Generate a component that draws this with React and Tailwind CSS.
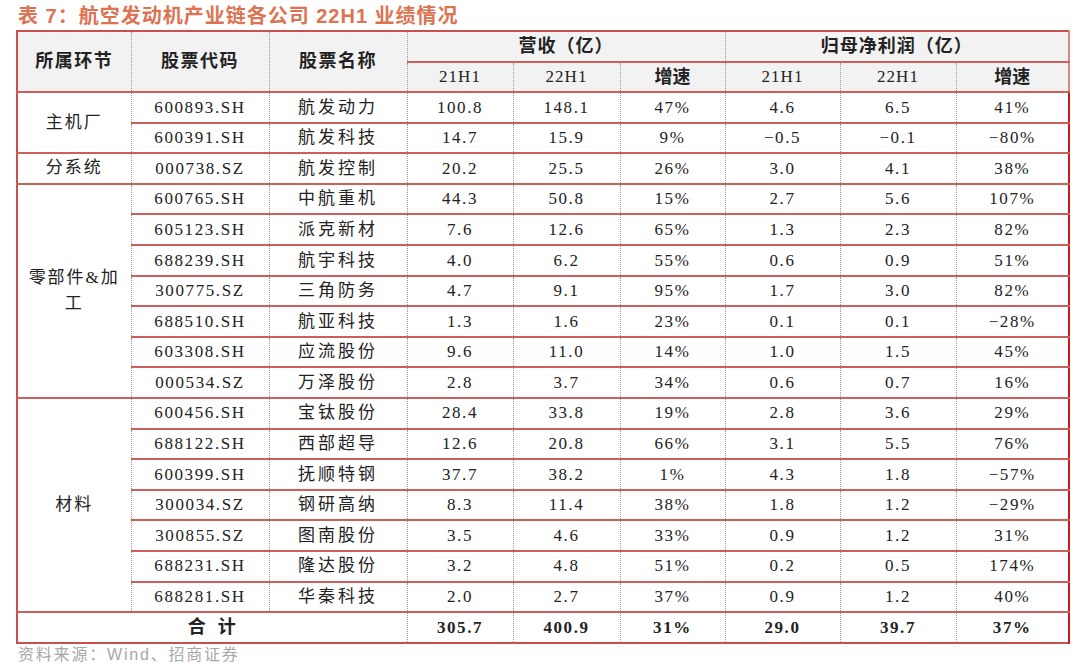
import React from 'react';

const groups = [
  {
    name: '主机厂',
    rows: [
      ['600893.SH', '航发动力', '100.8', '148.1', '47%', '4.6', '6.5', '41%'],
      ['600391.SH', '航发科技', '14.7', '15.9', '9%', '−0.5', '−0.1', '−80%'],
    ],
  },
  {
    name: '分系统',
    rows: [['000738.SZ', '航发控制', '20.2', '25.5', '26%', '3.0', '4.1', '38%']],
  },
  {
    name: (
      <>
        零部件&amp;加<br />工
      </>
    ),
    rows: [
      ['600765.SH', '中航重机', '44.3', '50.8', '15%', '2.7', '5.6', '107%'],
      ['605123.SH', '派克新材', '7.6', '12.6', '65%', '1.3', '2.3', '82%'],
      ['688239.SH', '航宇科技', '4.0', '6.2', '55%', '0.6', '0.9', '51%'],
      ['300775.SZ', '三角防务', '4.7', '9.1', '95%', '1.7', '3.0', '82%'],
      ['688510.SH', '航亚科技', '1.3', '1.6', '23%', '0.1', '0.1', '−28%'],
      ['603308.SH', '应流股份', '9.6', '11.0', '14%', '1.0', '1.5', '45%'],
      ['000534.SZ', '万泽股份', '2.8', '3.7', '34%', '0.6', '0.7', '16%'],
    ],
  },
  {
    name: '材料',
    rows: [
      ['600456.SH', '宝钛股份', '28.4', '33.8', '19%', '2.8', '3.6', '29%'],
      ['688122.SH', '西部超导', '12.6', '20.8', '66%', '3.1', '5.5', '76%'],
      ['600399.SH', '抚顺特钢', '37.7', '38.2', '1%', '4.3', '1.8', '−57%'],
      ['300034.SZ', '钢研高纳', '8.3', '11.4', '38%', '1.8', '1.2', '−29%'],
      ['300855.SZ', '图南股份', '3.5', '4.6', '33%', '0.9', '1.2', '31%'],
      ['688231.SH', '隆达股份', '3.2', '4.8', '51%', '0.2', '0.5', '174%'],
      ['688281.SH', '华秦科技', '2.0', '2.7', '37%', '0.9', '1.2', '40%'],
    ],
  },
];

// shared cell borders: red row lines, dotted grey column lines
const dot = 'border-l border-l-[#9a9a9a] [border-left-style:dotted]';
const line = 'border-b-2 border-b-[#cc5f5b]';

function App() {
  return (
    <div className="w-[1080px] h-[670px] bg-white pt-[5px] pl-[18px] font-['Liberation_Serif','Noto_Sans_CJK_SC',serif] text-[#222]">
      <div className="h-[25px] text-[20px] leading-[22px] font-bold tracking-[1px] text-[#dc7352] font-['Liberation_Sans','Noto_Sans_CJK_SC',sans-serif]">
        表 7：航空发动机产业链各公司 22H1 业绩情况
      </div>

      <table className="-ml-[2px] w-[1052px] table-fixed border-collapse border-2 border-[#c9514d] text-center text-[17px]">
        <colgroup>
          <col className="w-[114px]" />
          <col className="w-[138px]" />
          <col className="w-[138px]" />
          <col className="w-[106px]" />
          <col className="w-[107px]" />
          <col className="w-[105px]" />
          <col className="w-[115px]" />
          <col className="w-[116px]" />
          <col className="w-[113px]" />
        </colgroup>
        <thead className="bg-[#f2f2f2]">
          <tr className="h-[31px]">
            <th rowSpan={2} className={`${line} font-bold text-[18px] tracking-[1.5px]`}>所属环节</th>
            <th rowSpan={2} className={`${line} ${dot} font-bold text-[18px] tracking-[1.5px]`}>股票代码</th>
            <th rowSpan={2} className={`${line} ${dot} font-bold text-[18px] tracking-[1.5px]`}>股票名称</th>
            <th colSpan={3} className={`${line} ${dot} font-bold text-[18px] tracking-[1px]`}>营收（亿）</th>
            <th colSpan={3} className={`${line} ${dot} font-bold text-[18px] tracking-[1px] border-r-2 border-r-[#d98683]`}>归母净利润（亿）</th>
          </tr>
          <tr className="h-[30px]">
            <th className={`${line} ${dot} font-normal tracking-[1px]`}>21H1</th>
            <th className={`${line} ${dot} font-normal tracking-[1px]`}>22H1</th>
            <th className={`${line} ${dot} font-bold text-[18px]`}>增速</th>
            <th className={`${line} ${dot} font-normal tracking-[1px]`}>21H1</th>
            <th className={`${line} ${dot} font-normal tracking-[1px]`}>22H1</th>
            <th className={`${line} ${dot} font-bold text-[18px] border-r-2 border-r-[#d98683]`}>增速</th>
          </tr>
        </thead>
        <tbody>
          {groups.map((g, gi) =>
            g.rows.map((r, ri) => (
              <tr key={`${gi}-${ri}`} className="h-[30.6px]">
                {ri === 0 && (
                  <td rowSpan={g.rows.length} className={`${line} text-[17px] leading-[26px] tracking-[2px]`}>
                    {g.name}
                  </td>
                )}
                <td className={`${line} ${dot} tracking-[1.6px]`}>{r[0]}</td>
                <td className={`${line} ${dot} tracking-[3px]`}>{r[1]}</td>
                {r.slice(2).map((v, i) => (
                  <td
                    key={i}
                    className={`${line} ${dot} tracking-[1.6px] ${i === 5 ? 'border-r-2 border-r-[#c41a1a]' : ''}`}
                  >
                    {v}
                  </td>
                ))}
              </tr>
            ))
          )}
          <tr className="h-[31px] font-bold">
            <td colSpan={3} className="border-t-2 border-t-[#c0302c] text-[18px] tracking-[1px]">
              合&nbsp;&nbsp;计
            </td>
            {['305.7', '400.9', '31%', '29.0', '39.7', '37%'].map((v, i) => (
              <td
                key={i}
                className={`border-t-2 border-t-[#c0302c] ${dot} tracking-[1.6px] ${i === 5 ? 'border-r-2 border-r-[#c41a1a]' : ''}`}
              >
                {v}
              </td>
            ))}
          </tr>
        </tbody>
      </table>

      <div className="-mt-[1px] text-[16px] tracking-[1.8px] text-[#a8a8a8] font-['Liberation_Sans','Noto_Sans_CJK_SC',sans-serif]">
        资料来源：Wind、招商证券
      </div>
    </div>
  );
}

export default App;
